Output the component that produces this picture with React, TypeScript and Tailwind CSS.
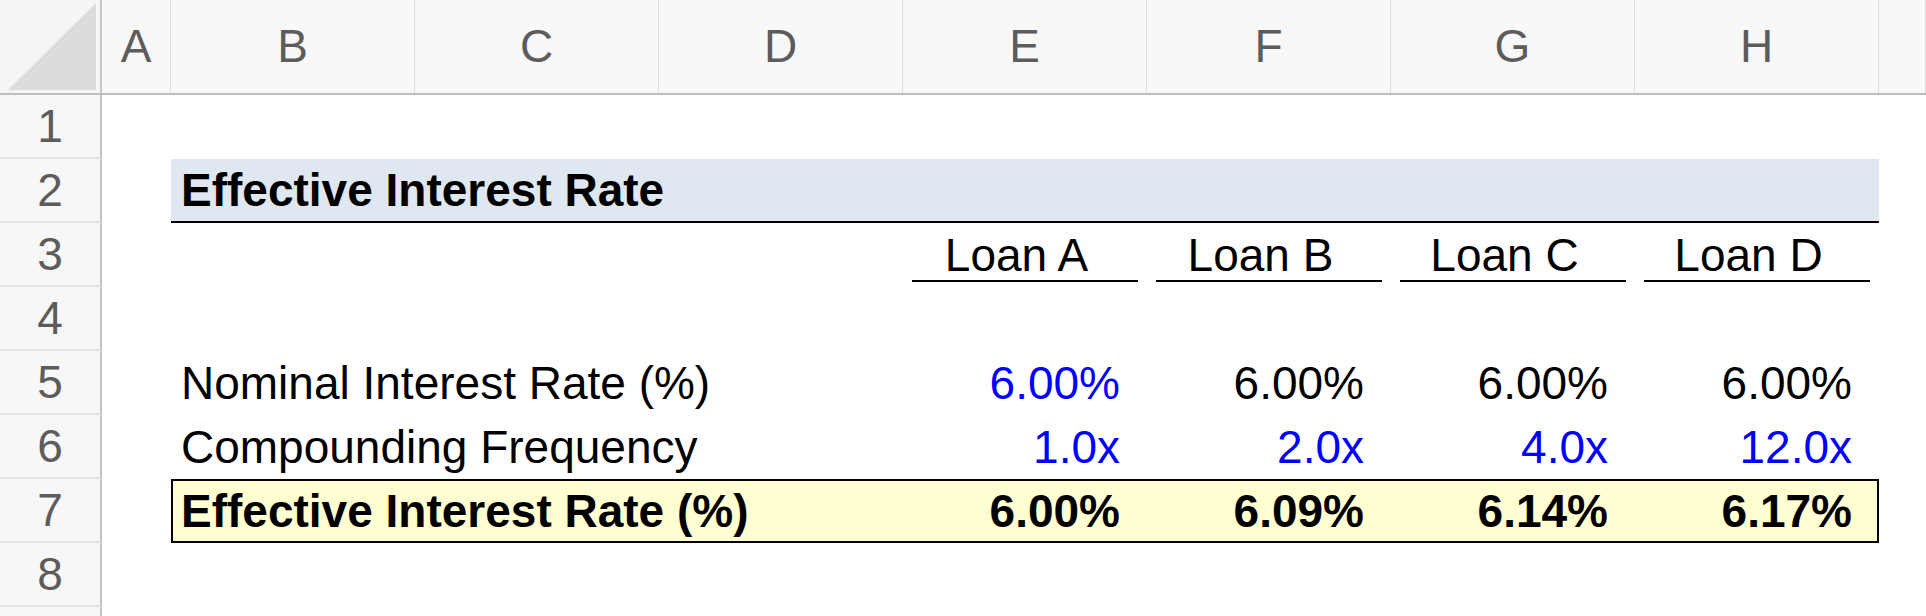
import React from "react";

const GRID = "grid grid-cols-[102px_69px_repeat(7,244px)_1fr]";

function RowHead({ n }: { n?: number }) {
  return (
    <div className="h-[64px] bg-[#f7f7f7] border-r-2 border-r-[#c4c4c4] border-b-2 border-b-[#e4e4e4] text-center leading-[62px] text-[#5c5c5c]">
      {n}
    </div>
  );
}

function Row({ n, children }: { n?: number; children?: React.ReactNode }) {
  return (
    <div className={`${GRID} h-[64px]`}>
      <RowHead n={n} />
      <div />
      {children}
    </div>
  );
}

const loans = ["Loan A", "Loan B", "Loan C", "Loan D"];
const nominal = ["6.00%", "6.00%", "6.00%", "6.00%"];
const freq = ["1.0x", "2.0x", "4.0x", "12.0x"];
const eff = ["6.00%", "6.09%", "6.14%", "6.17%"];

export default function App() {
  const headers = ["A", "B", "C", "D", "E", "F", "G", "H", ""];
  return (
    <div className="w-[1926px] h-[616px] overflow-hidden bg-white font-['Liberation_Sans',Arial,sans-serif] text-[46px] text-black">
      {/* Column header */}
      <div className={`${GRID} h-[95px] bg-[#f8f8f8] border-b-2 border-b-[#bfbfbf]`}>
        <div className="relative border-r-2 border-r-[#c4c4c4] bg-[#f5f5f5]">
          <svg width="100" height="93" className="block">
            <polygon points="8,90 96,90 96,3" fill="#dcdcdc" />
          </svg>
        </div>
        {headers.map((h, i) => (
          <div
            key={i}
            className="border-r border-r-[#dcdcdc] text-center leading-[93px] text-[#5c5c5c]"
          >
            {h}
          </div>
        ))}
      </div>

      <Row n={1} />

      {/* Row 2 title */}
      <Row n={2}>
        <div className="col-span-7 h-[64px] bg-[#dfe7f0] border-b-2 border-b-black pl-[10px] font-bold leading-[62px] whitespace-nowrap">
          Effective Interest Rate
        </div>
      </Row>

      {/* Row 3 loan headers */}
      <Row n={3}>
        <div />
        <div />
        <div />
        {loans.map((l) => (
          <div key={l} className="px-[9px]">
            <div className="h-[59px] border-b-2 border-b-black pt-[7px] pr-[17px] text-center leading-[50px] whitespace-nowrap">
              {l}
            </div>
          </div>
        ))}
      </Row>

      <Row n={4} />

      {/* Row 5 */}
      <Row n={5}>
        <div className="col-span-3 pl-[10px] leading-[64px] whitespace-nowrap">
          Nominal Interest Rate (%)
        </div>
        {nominal.map((v, i) => (
          <div
            key={i}
            className={`pr-[27px] text-right leading-[64px] ${i === 0 ? "text-[#0000ff]" : "text-black"}`}
          >
            {v}
          </div>
        ))}
      </Row>

      {/* Row 6 */}
      <Row n={6}>
        <div className="col-span-3 pl-[10px] leading-[64px] whitespace-nowrap">
          Compounding Frequency
        </div>
        {freq.map((v, i) => (
          <div key={i} className="pr-[27px] text-right leading-[64px] text-[#0000ff]">
            {v}
          </div>
        ))}
      </Row>

      {/* Row 7 */}
      <Row n={7}>
        <div className="col-span-7 h-[64px] border-2 border-black bg-[#ffffd1] font-bold grid grid-cols-[730px_244px_244px_244px_242px]">
          <div className="pl-[8px] leading-[60px] whitespace-nowrap">
            Effective Interest Rate (%)
          </div>
          {eff.map((v, i) => (
            <div
              key={i}
              className={`text-right leading-[60px] ${i === 3 ? "pr-[25px]" : "pr-[27px]"}`}
            >
              {v}
            </div>
          ))}
        </div>
      </Row>

      <Row n={8} />
      <Row />
    </div>
  );
}
